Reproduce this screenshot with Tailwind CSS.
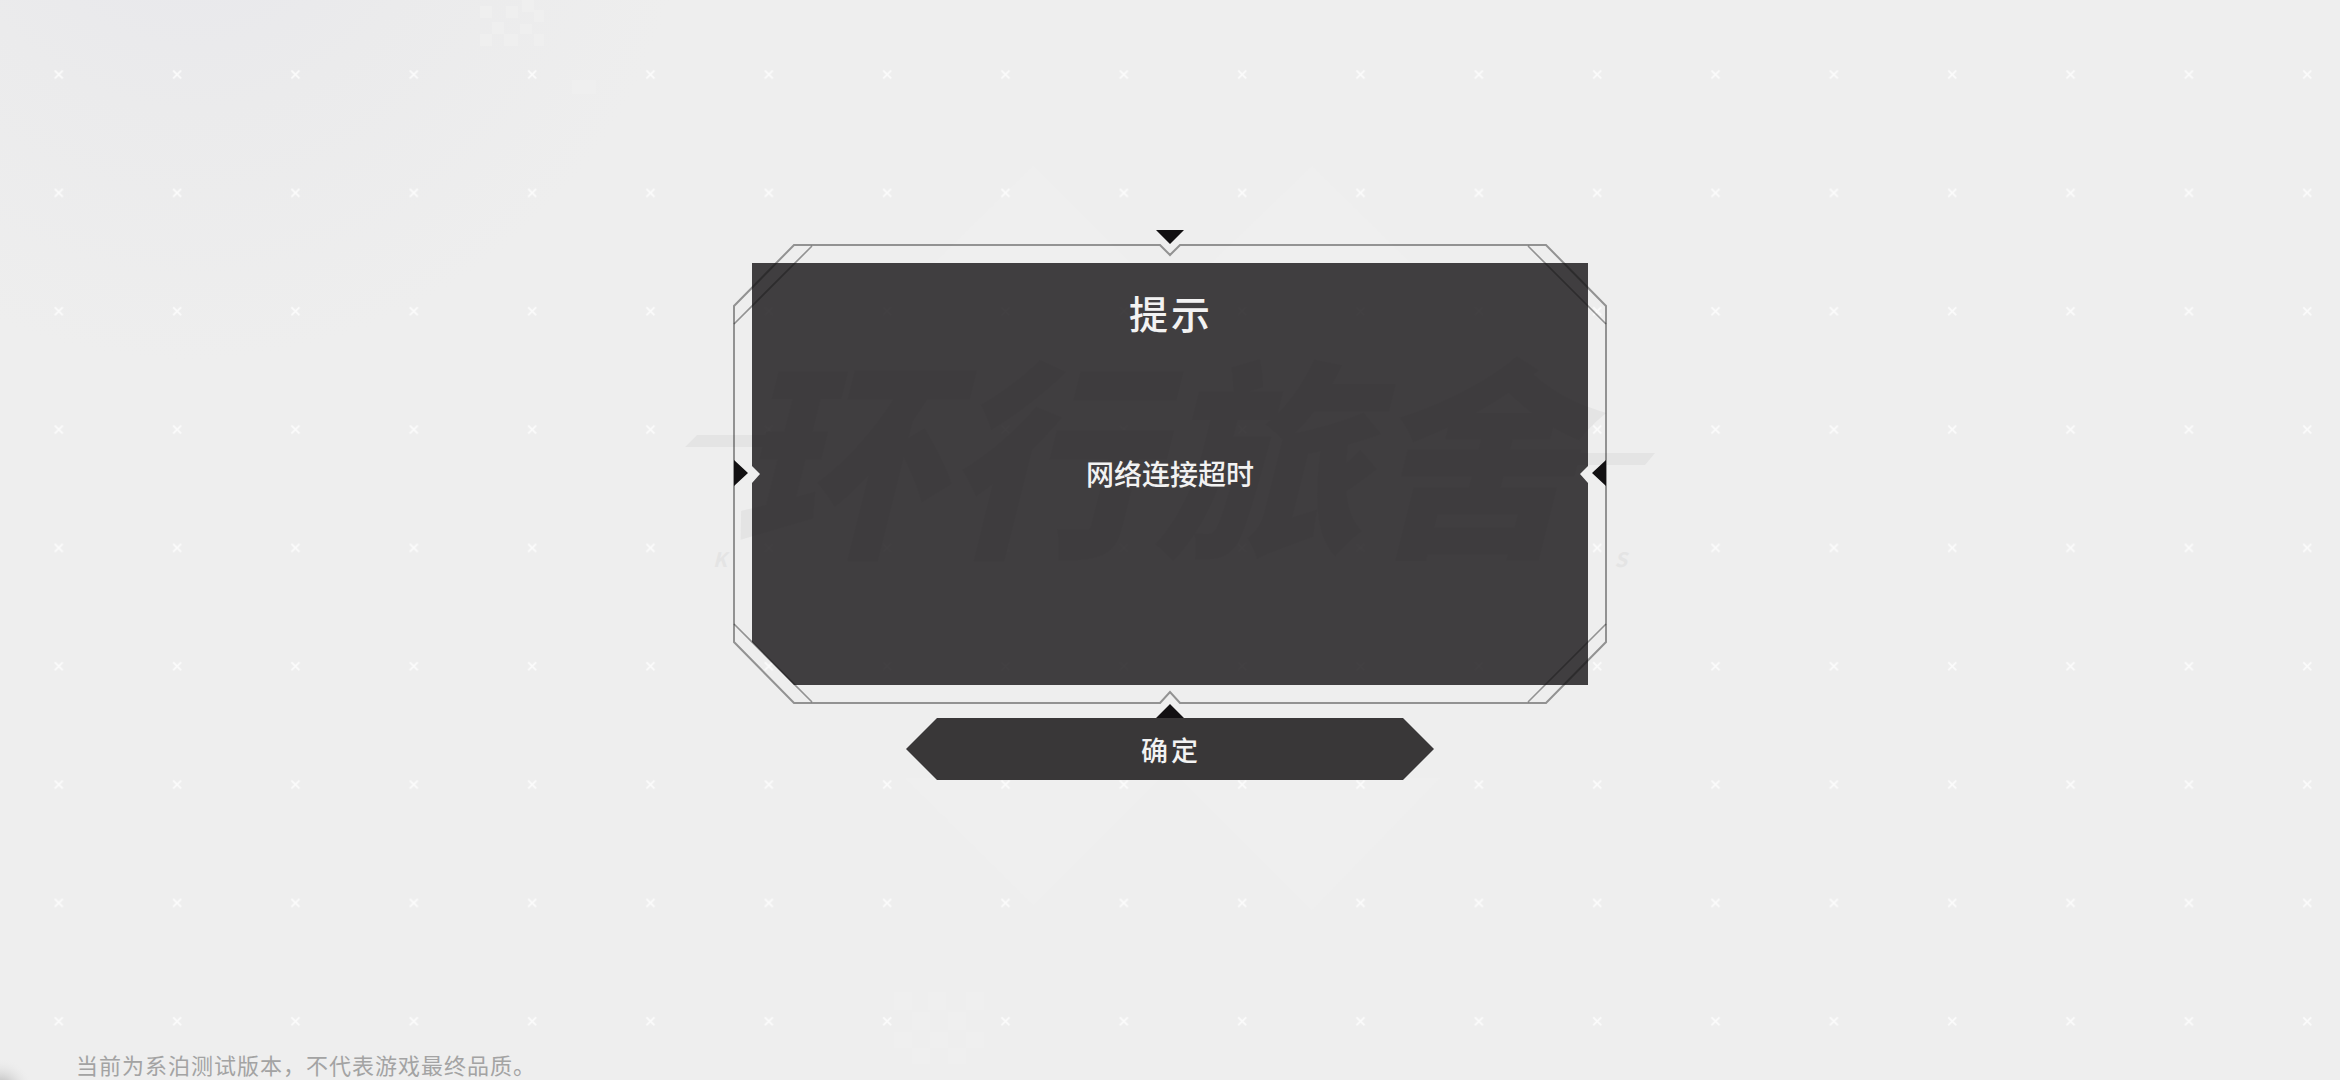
<!DOCTYPE html>
<html lang="zh-CN">
<head>
    <meta charset="utf-8">
    <meta name="viewport" content="width=device-width, initial-scale=1.0">
    <title>提示</title>
    <script src="https://cdn.jsdelivr.net/npm/@tailwindcss/browser@4"></script>
</head>
<body class="relative flex min-h-screen flex-col overflow-hidden bg-[#eeeeee] font-['Noto_Sans_CJK_SC',sans-serif]">
    <!-- background -->
    <svg class="absolute inset-0 h-full w-full" viewBox="0 0 2340 1080" preserveAspectRatio="xMidYMid slice" aria-hidden="true">
        <defs>
            <radialGradient id="shade" gradientUnits="userSpaceOnUse" cx="190" cy="-140" r="500">
                <stop offset="0.25" stop-color="#e9e9ec" />
                <stop offset="0.5" stop-color="#ebebec" />
                <stop offset="1" stop-color="#eeeeee" />
            </radialGradient>
            <radialGradient id="corner" gradientUnits="userSpaceOnUse" cx="0" cy="1092" r="34">
                <stop offset="0" stop-color="#9a9a9a" />
                <stop offset="1" stop-color="#eeeeee" stop-opacity="0" />
            </radialGradient>
            <pattern id="crosses" patternUnits="userSpaceOnUse" x="-0.2" y="15.5" width="118.34" height="118.34">
                <path d="M55 55l8 8M63 55l-8 8" stroke="#fbfbfb" stroke-width="1.8" />
            </pattern>
        </defs>
        <rect width="760" height="430" fill="url(#shade)" />
        <path d="M905 778l128 127 137-137 142 142 128-132z" fill="#efefef" />
        <path d="M905 292l128-126 137 137 142-137 128 126z" fill="#efefef" />
        <path d="M480 6h12v12h-12zM492 22h12v12h-12zM480 34h12v12h-12zM506 6h12v12h-12zM522 0h12v12h-12zM534 10h10v12h-10zM520 24h12v10h-12zM504 34h14v12h-14zM534 34h10v12h-10zM572 80h24v14h-24z" fill="#efefef" />
        <path d="M894 992h18v18h-18zM928 992h18v18h-18zM966 992h18v18h-18zM912 1012h18v18h-18zM948 1012h18v18h-18zM894 1032h18v16h-18zM930 1032h18v16h-18zM966 1032h18v16h-18zM912 1048h18v16h-18zM948 1048h18v16h-18z" fill="#efefef" />
        <rect width="2340" height="1080" fill="url(#crosses)" />
        <rect y="1050" width="40" height="30" fill="url(#corner)" />
    </svg>

    <main class="relative flex flex-1 flex-col items-center pt-[245px]">
        <section class="relative h-[458px] w-[874px] px-[19px] py-[18px]" role="dialog" aria-labelledby="title" aria-describedby="message">
            <!-- game logo behind the panel -->
            <div class="absolute -inset-x-12 top-[104px] text-center text-[#e4e4e4] italic" aria-hidden="true">
                <div class="pr-8 text-[212px] leading-[200px] font-black whitespace-nowrap">环行旅舍</div>
                <div class="flex justify-between px-[28px] text-[20px] leading-[20px] font-bold"><span>K</span><span>S</span></div>
                <svg class="absolute inset-0 h-full w-full" viewBox="0 0 970 220" preserveAspectRatio="none">
                    <path d="M12 86h90l-10 12H0zM840 104h130l-10 12H840z" fill="#e4e4e4" />
                </svg>
            </div>

            <div class="relative grid h-full grid-rows-[98px_1fr_100px] place-items-center bg-[#232123]/86 text-[#f2f2f2] [clip-path:polygon(0_0,100%_0,100%_203px,828px_211px,100%_220px,100%_100%,42px_100%,0_379px,0_220px,8px_211px,0_203px)]">
                <h1 id="title" class="pl-[2px] text-[39px] leading-[56px] font-medium tracking-[3px]">提示</h1>
                <p id="message" class="text-[28px] leading-[40px] font-medium">网络连接超时</p>
            </div>

            <!-- frame -->
            <svg class="absolute inset-0 h-full w-full overflow-visible" viewBox="0 0 874 458" fill="none" aria-hidden="true">
                <path d="M61 0H427l10 10 10-10H813L873 61V397L813 458H447l-10-11-10 11H61L1 397V61z" stroke="#141214" stroke-opacity="0.42" stroke-width="2" />
                <path d="M79 1L1 79M795 1l78 78M1 379l78 78M873 379l-78 78" stroke="#141214" stroke-opacity="0.42" stroke-width="1.6" />
                <path d="M423-15h28l-14 14zM423 473l14-14 14 14zM1 215l14 13-14 13zM873 215l-14 13 14 13z" fill="#121012" />
            </svg>
        </section>

        <button type="button" class="mt-[15px] h-[62px] w-[528px] cursor-pointer bg-[#393738] pt-[2px] pl-[2px] text-[27px] leading-[40px] font-medium tracking-[3px] text-[#f2f2f2] [clip-path:polygon(31px_0,497px_0,100%_50%,497px_100%,31px_100%,0_50%)]">确定</button>
    </main>

    <footer class="relative flex h-[32px] items-center px-[76px] text-[22px] leading-[24px] tracking-[1px] text-[#a3a3a3]">
        <p>当前为系泊测试版本，不代表游戏最终品质。</p>
    </footer>
</body>
</html>
